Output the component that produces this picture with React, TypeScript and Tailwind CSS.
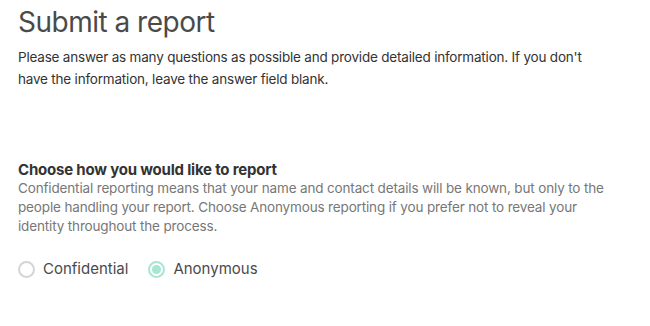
import React, { useState } from "react";

const font = { fontFamily: "Inter, 'Noto Sans', sans-serif" };

const App = () => {
  const [mode, setMode] = useState<"confidential" | "anonymous">("anonymous");

  const options = [
    { value: "confidential" as const, label: "Confidential" },
    { value: "anonymous" as const, label: "Anonymous" },
  ];

  return (
    <div className="min-h-[326px] w-[650px] bg-white px-[18px] pt-[2px]" style={font}>
      {/* Header */}
      <h1 className="text-[28px] leading-[40px] text-[#4a4a4a] tracking-[-0.5px]">Submit a report</h1>
      <p className="mt-[4px] w-[590px] text-[13.5px] leading-[22px] tracking-[-0.2px] text-[#333]">
        Please answer as many questions as possible and provide detailed information. If you don't have the
        information, leave the answer field blank.
      </p>

      {/* Reporting mode */}
      <div className="mt-[70px]">
        <h2 className="text-[15px] font-bold leading-[20px] tracking-[-0.2px] text-[#333]">
          Choose how you would like to report
        </h2>
        <p className="mt-[-1px] w-[590px] text-[13.5px] leading-[19px] tracking-[-0.15px] text-[#777]">
          Confidential reporting means that your name and contact details will be known, but only to the people
          handling your report. Choose Anonymous reporting if you prefer not to reveal your identity throughout the
          process.
        </p>

        <div className="mt-[23px] flex items-center gap-[20px]">
          {options.map((opt) => {
            const checked = mode === opt.value;
            return (
              <label key={opt.value} className="flex cursor-pointer items-center gap-[8px]" onClick={() => setMode(opt.value)}>
                <span
                  className={`flex h-[17px] w-[17px] items-center justify-center rounded-full border-2 ${
                    checked ? "border-[#a8e6d2]" : "border-[#d4d4d4]"
                  }`}
                >
                  {checked && <span className="h-[9px] w-[9px] rounded-full bg-[#a8e6d2]" />}
                </span>
                <span className="text-[15px] leading-[20px] text-[#4a4a4a]">{opt.label}</span>
              </label>
            );
          })}
        </div>
      </div>
    </div>
  );
};

export default App;
